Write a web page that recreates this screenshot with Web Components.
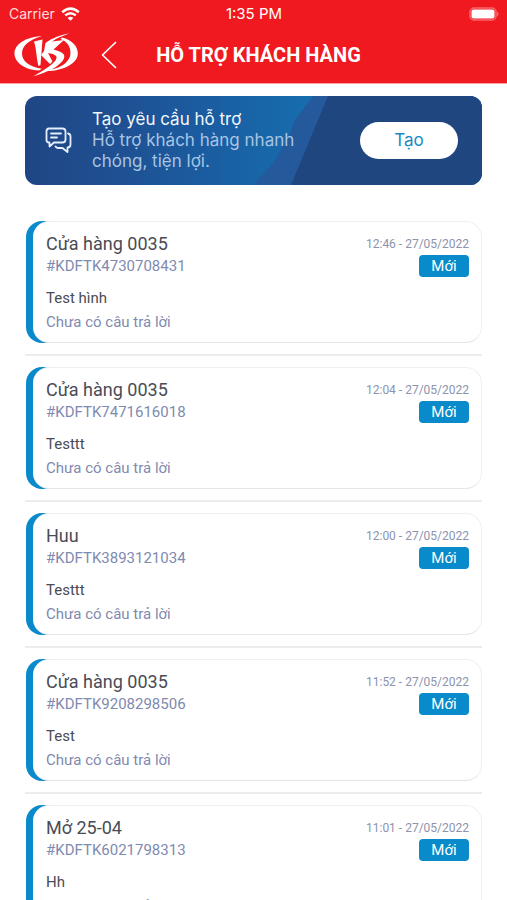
<!DOCTYPE html>
<html lang="vi">
<head>
<meta charset="utf-8">
<meta name="viewport" content="width=device-width, initial-scale=1">
<title>Hỗ trợ khách hàng</title>
<style>
  body { margin: 0; background: #fff; font-family: Roboto, "Noto Sans", sans-serif; }
</style>
</head>
<body>
<support-app></support-app>

<script>
const define = (name, html, setup) => {
  const template = document.createElement('template');
  template.innerHTML = html;
  customElements.define(name, class extends HTMLElement {
    constructor() {
      super();
      this.attachShadow({ mode: 'open' }).append(template.content.cloneNode(true));
      if (setup) setup(this);
    }
  });
};

define('status-bar', `
<style>
  :host { display: grid; grid-template-columns: 1fr auto 1fr; align-items: center; height: 28px; padding: 0 8px 0 9px;
    font: 14px/28px Inter, Roboto, sans-serif; color: #fff; }
  .left { display: flex; align-items: center; gap: 6px; color: #ffdcdc; }
  .time { font-size: 15px; }
  .battery { justify-self: end; }
  svg { display: block; }
</style>
<span class="left"><span>Carrier</span>
  <svg width="19" height="14" viewBox="0 0 19 14" fill="none" stroke="#fff" stroke-width="2.5" aria-hidden="true">
    <path d="M1.2 5.2Q9.5-2 17.8 5.2M4.2 8.4Q9.5 4 14.8 8.4"/><path d="M6.6 10.9Q9.5 8.6 12.4 10.9L9.5 13.8Z" fill="#fff" stroke="none"/>
  </svg>
</span>
<span class="time">1:35 PM</span>
<svg class="battery" width="30" height="14" viewBox="0 0 30 14" aria-hidden="true">
  <rect x="1" y="1" width="26" height="12" rx="4" fill="none" stroke="#f9686d" stroke-width="1.5"/>
  <rect x="2.5" y="2.5" width="23" height="9" rx="2" fill="#fff"/>
  <path d="M28 4.5Q31 7 28 9.5Z" fill="#f9686d"/>
</svg>`);

define('brand-logo', `
<style>:host { display: block; } svg { display: block; }</style>
<svg width="64" height="44" viewBox="0 0 64 44" fill="#fff" role="img" aria-label="KS">
  <path d="M28 3C11 4 .5 11.500 .5 20.500S11 37 25 37.500L28 35.800C16 34 8 28.500 8 20.500S15 7 28 3Z"/>
  <path d="M48 4.500C58 7 63.800 13 63.800 20.500C63.800 30 50 38 33 38L36 36.500C48 35 56.500 28 56.500 20C56.500 13 53 8.500 46.500 6Z"/>
  <path d="M20 8.500L28.500 6.500L26.500 32L24.500 33C22.500 26 22.500 16 20 8.500Z"/>
  <path d="M55.500 .3C47 2 38 5 31.500 10L30 18L27 22L36 31L38.500 28.500L34 20C40 21 43 22.500 42.500 25C41.500 30 32 36 19.500 43.200C33 39.500 46 33.500 50 25.500C52 20 46 18.500 39.500 16.500L50 7L38 8.500C43 5 49 3 55.500 .3Z"/>
</svg>`);

define('title-bar', `
<style>
  :host { display: grid; grid-template-columns: 64px 24px 1fr 24px 56px; column-gap: 19px; align-items: center; padding: 0 12px 1px 14px; height: 54px; color: #fff; }
  button { display: grid; place-items: center; justify-self: center; width: 24px; height: 32px; padding: 0; border: 0; background: none; color: inherit; }
  h1 { margin: 0; font: 700 20px/28px Roboto, sans-serif; text-align: center; white-space: nowrap; }
</style>
<brand-logo></brand-logo>
<button type="button" aria-label="Quay lại">
  <svg width="16" height="28" viewBox="0 0 16 28" fill="none" stroke="#fff" stroke-width="1.7" stroke-linecap="round" stroke-linejoin="round"><path d="M14.500 1.500L1.500 14L14.500 26.500"/></svg>
</button>
<h1><slot></slot></h1>`);

define('create-banner', `
<style>
  :host { position: relative; isolation: isolate; display: flex; align-items: center; gap: 20px; padding: 13px 24px 13px 20px; border-radius: 12px; overflow: hidden;
    background: linear-gradient(90deg, #1f4684 0%, #1f4f91 18%, #1a5ea2 42%, #166dae 62%, #166dae 100%);
    font-family: Inter, Roboto, sans-serif; font-size: 17px; line-height: 21px; }
  .bands { position: absolute; inset: 0; width: 100%; height: 100%; z-index: -1; }
  .icon { flex: none; }
  .copy { flex: 1; max-width: 210px; }
  h2, p { margin: 0; font: inherit; }
  h2 { color: #f2f7ff; }
  p { color: #a9c4e3; }
  button { flex: none; margin-left: auto; min-width: 98px; height: 37px; padding: 0 24px; border: 0; border-radius: 19px; background: #fff; color: #1988c7; font: inherit; }
</style>
<svg class="bands" viewBox="0 0 457 89" preserveAspectRatio="none" aria-hidden="true">
  <path d="M288 0H457V89H228L249 66L264 40L270 24Z" fill="#24599c"/>
  <path d="M303 0H457V89H266Z" fill="#204680"/>
</svg>
<svg class="icon" width="27" height="27" viewBox="0 0 27 27" fill="none" stroke="#e6efff" stroke-width="1.8" stroke-linecap="round" stroke-linejoin="round" aria-hidden="true">
  <path d="M4 1.500H17.500Q20.500 1.500 20.500 4.500V12.500Q20.500 15.500 17.500 15.500H9L4.500 19.500V15.500H4Q1.500 15.500 1.500 13V4Q1.500 1.500 4 1.500Z"/>
  <path d="M6 6.500H16M6 10.500H12M23 6.500Q25.500 7 25.500 9.500V17.500Q25.500 20.500 22.500 20.500V25L17.500 21H13.500Q11.500 21 10.500 19.500"/>
</svg>
<div class="copy"><h2>Tạo yêu cầu hỗ trợ</h2><p>Hỗ trợ khách hàng nhanh chóng, tiện lợi.</p></div>
<button type="button">Tạo</button>`);

define('ticket-card', `
<style>
  :host { display: block; border-radius: 16px; background: linear-gradient(90deg, #098acb 40px, #fff 40px); }
  .sheet { margin-left: 7px; padding: 11px 12px 9px 13px; border: 1px solid #eef0f2; border-left: 0; border-bottom-color: #e4e6e9; border-radius: 16px; background: #fff; }
  .row { display: flex; justify-content: space-between; align-items: center; gap: 8px; }
  h2, p { margin: 0; font-weight: 400; }
  h2 { font-size: 18px; line-height: 22px; color: #4a4c55; }
  .id, .reply { font-size: 15px; line-height: 22px; color: #808ab0; }
  time { font-size: 12px; line-height: 22px; color: #8b93ad; }
  .badge { min-width: 50px; box-sizing: border-box; border-radius: 4px; background: #098acb; color: #fff; font-size: 15px; line-height: 22px; text-align: center; }
  .subject { margin-top: 10px; font-size: 15px; line-height: 22px; color: #4a4c55; }
  .reply { margin-top: 2px; }
</style>
<div class="sheet">
  <div class="row"><h2><slot name="title"></slot></h2><time><slot name="time"></slot></time></div>
  <div class="row"><span class="id"><slot name="id"></slot></span><span class="badge">Mới</span></div>
  <p class="subject"><slot name="subject"></slot></p>
  <p class="reply">Chưa có câu trả lời</p>
</div>`);

const tickets = [
  ['Cửa hàng 0035', '12:46 - 27/05/2022', '#KDFTK4730708431', 'Test hình'],
  ['Cửa hàng 0035', '12:04 - 27/05/2022', '#KDFTK7471616018', 'Testtt'],
  ['Huu', '12:00 - 27/05/2022', '#KDFTK3893121034', 'Testtt'],
  ['Cửa hàng 0035', '11:52 - 27/05/2022', '#KDFTK9208298506', 'Test'],
  ['Mở 25-04', '11:01 - 27/05/2022', '#KDFTK6021798313', 'Hh']
];

define('ticket-list', `
<style>
  :host { display: block; }
  ul { list-style: none; margin: 0; padding: 0; }
  li + li { margin-top: 11px; padding-top: 11px; border-top: 2px solid #ebecee; }
  ticket-card { margin-left: 1px; }
</style>
<ul></ul>`, host => {
  const list = host.shadowRoot.querySelector('ul');
  for (const [title, time, id, subject] of tickets) {
    const item = document.createElement('li');
    const card = document.createElement('ticket-card');
    for (const [slot, text] of Object.entries({ title, time, id, subject })) {
      const span = document.createElement('span');
      span.slot = slot;
      span.textContent = text;
      card.append(span);
    }
    item.append(card);
    list.append(item);
  }
});

define('support-app', `
<style>
  :host { display: flex; flex-direction: column; height: 100vh; }
  header { flex: none; background: #f11920; border-bottom: 1px solid #f9a3a6; }
  main { flex: 1; min-height: 0; overflow-y: auto; scrollbar-width: none; padding: 12px 25px; }
  create-banner { margin-bottom: 36px; }
</style>
<header><status-bar></status-bar><title-bar>HỖ TRỢ KHÁCH HÀNG</title-bar></header>
<main><create-banner></create-banner><ticket-list></ticket-list></main>`);
</script>
</body>
</html>
